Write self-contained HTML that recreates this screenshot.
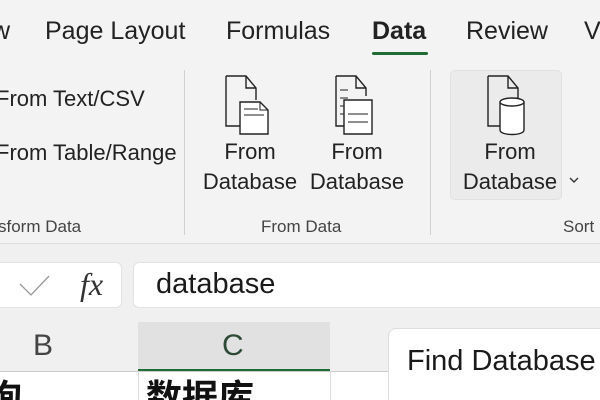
<!DOCTYPE html>
<html><head><meta charset="utf-8"><style>
*{margin:0;padding:0;box-sizing:border-box}
html,body{width:600px;height:400px;overflow:hidden}
body{background:#f3f3f3;font-family:"Liberation Sans","Noto Sans CJK SC",sans-serif;color:#222;position:relative}
.a{position:absolute;white-space:nowrap}
.t{font-size:25px;top:17px}
.r{font-size:22px}
.g{font-size:17px;color:#444;top:217px}
.c{text-align:center;font-size:22px;line-height:30px}
</style></head><body>
<div class="a t" style="left:-8px">w</div>
<div class="a t" style="left:45px">Page Layout</div>
<div class="a t" style="left:226px">Formulas</div>
<div class="a t" style="left:372px;font-weight:bold">Data</div>
<div class="a" style="left:372px;top:52px;width:56px;height:3px;background:#1e6b34;border-radius:2px"></div>
<div class="a t" style="left:466px">Review</div>
<div class="a t" style="left:584px">V</div>

<div class="a r" style="left:-4px;top:86px">From Text/CSV</div>
<div class="a r" style="left:-4px;top:140px">From Table/Range</div>
<div class="a g" style="left:-2px">sform Data</div>
<div class="a g" style="left:261px">From Data</div>
<div class="a g" style="left:563px">Sort</div>
<div class="a" style="left:184px;top:70px;width:1px;height:165px;background:#d0d0d0"></div>
<div class="a" style="left:430px;top:70px;width:1px;height:165px;background:#d0d0d0"></div>

<svg class="a" style="left:222px;top:74px" width="60" height="66" viewBox="0 0 60 66" fill="none" stroke="#222" stroke-width="1.4">
<path d="M4 2H24L34 14V26M24 2V14H34M18 52H4V2"/>
<path d="M18 28H38L46 36V60H18Z" fill="#fff"/><path d="M38 28V36H46M22 35H36M22 41H42" stroke-width="1"/>
</svg>
<div class="a c" style="left:200px;top:137px;width:100px">From<br>Database</div>

<svg class="a" style="left:332px;top:74px" width="60" height="66" viewBox="0 0 60 66" fill="none" stroke="#222" stroke-width="1.4">
<path d="M4 2H24L34 14V22M24 2V14H34M4 2V52H12"/>
<path d="M8 16H16M8 24H16M8 32H12M8 40H12" stroke-width="1"/>
<path d="M12 26H40V60H12Z" fill="#fff"/><path d="M16 40H36M16 48H36" stroke-width="1"/>
</svg>
<div class="a c" style="left:307px;top:137px;width:100px">From<br>Database</div>

<div class="a" style="left:450px;top:70px;width:112px;height:130px;background:#ebebeb;border:1px solid #e0e0e0;border-radius:5px"></div>
<svg class="a" style="left:484px;top:74px" width="60" height="66" viewBox="0 0 60 66" fill="none" stroke="#222" stroke-width="1.4">
<path d="M4 2H24L34 14V24M24 2V14H34M4 2V52H16"/>
<path d="M16 28V56C16 62 40 62 40 56V28" fill="#fff"/><ellipse cx="28" cy="28" rx="12" ry="4" fill="#fff"/>
</svg>
<div class="a c" style="left:460px;top:137px;width:100px">From<br>Database</div>
<svg class="a" style="left:568px;top:176px" width="12" height="8"><path d="M2 2L6 6L10 2" stroke="#333" stroke-width="1.4" fill="none"/></svg>

<div class="a" style="left:0;top:243px;width:600px;height:157px;background:#f0f0f0;border-top:1px solid #ddd"></div>
<div class="a" style="left:-10px;top:262px;width:132px;height:46px;background:#fff;border:1px solid #e2e2e2;border-radius:6px"></div>
<svg class="a" style="left:18px;top:272px" width="34" height="26"><path d="M2 12L13 23L31 4" stroke="#999" stroke-width="1.3" fill="none"/></svg>
<div class="a" style="left:80px;top:266px;font-family:'Liberation Serif',serif;font-style:italic;font-size:32px;color:#333">fx</div>
<div class="a" style="left:133px;top:262px;width:480px;height:46px;background:#fff;border:1px solid #e2e2e2;border-radius:6px"></div>
<div class="a" style="left:156px;top:268px;font-size:29px;color:#1a1a1a">database</div>

<div class="a" style="left:138px;top:322px;width:192px;height:49px;background:#e1e1e1;border-bottom:2px solid #1e6b34"></div>
<div class="a" style="left:33px;top:329px;font-size:30px;color:#444">B</div>
<div class="a" style="left:222px;top:329px;font-size:30px;color:#2d4a36">C</div>
<div class="a" style="left:0;top:371px;width:600px;height:30px;background:#fff;border-top:1px solid #ccc"></div>
<div class="a" style="left:138px;top:371px;width:1px;height:30px;background:#ddd"></div>
<div class="a" style="left:330px;top:371px;width:1px;height:30px;background:#ddd"></div>
<div class="a" style="left:-14px;top:370px;font-size:36px;font-weight:bold;color:#111;font-family:'Noto Sans CJK SC',sans-serif;line-height:50px">询</div>
<div class="a" style="left:146px;top:370px;font-size:36px;font-weight:bold;color:#111;font-family:'Noto Sans CJK SC',sans-serif;line-height:50px">数据库</div>

<div class="a" style="left:388px;top:328px;width:230px;height:90px;background:#fff;border:1px solid #ddd;border-radius:8px"></div>
<div class="a" style="left:407px;top:345px;font-size:29px;color:#1a1a1a">Find Database</div>
</body></html>
